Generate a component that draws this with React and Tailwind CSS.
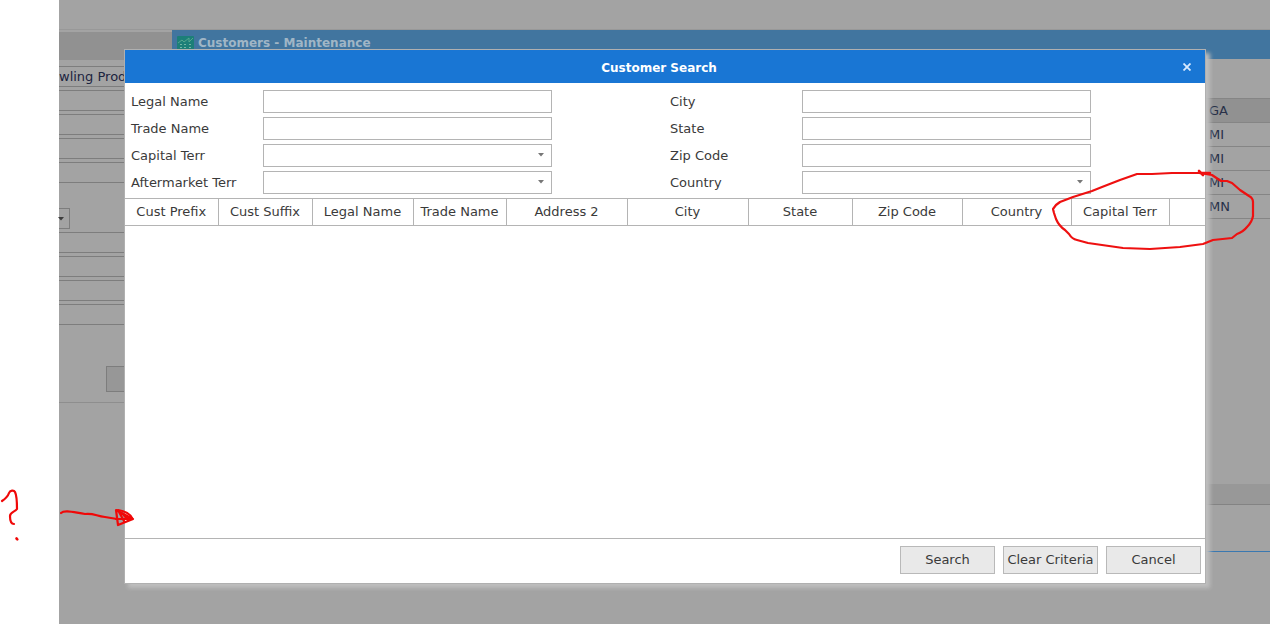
import React from "react";

const COLUMNS = [
  { name: "Cust Prefix", width: "w-[93px]" },
  { name: "Cust Suffix", width: "w-[94px]" },
  { name: "Legal Name", width: "w-[101px]" },
  { name: "Trade Name", width: "w-[93px]" },
  { name: "Address 2", width: "w-[121px]" },
  { name: "City", width: "w-[121px]" },
  { name: "State", width: "w-[104px]" },
  { name: "Zip Code", width: "w-[110px]" },
  { name: "Country", width: "w-[109px]" },
  { name: "Capital Terr", width: "w-[98px]" },
];

const LEFT_FIELDS = [
  { id: "legalName", label: "Legal Name" },
  { id: "tradeName", label: "Trade Name" },
  { id: "capitalTerr", label: "Capital Terr", select: true },
  { id: "aftermarketTerr", label: "Aftermarket Terr", select: true },
];

const RIGHT_FIELDS = [
  { id: "city", label: "City" },
  { id: "state", label: "State" },
  { id: "zipCode", label: "Zip Code" },
  { id: "country", label: "Country", select: true },
];

const STATES = ["GA", "MI", "MI", "MI", "MN"];

function Caret({ className }) {
  return (
    <svg viewBox="0 0 6 4" className={className} aria-hidden="true">
      <path d="M0 0h6L3 3.5z" fill="currentColor" />
    </svg>
  );
}

function Field({ id, label, select }) {
  return (
    <div className="flex h-[23px] items-center">
      <label htmlFor={id} className="w-[132px] shrink-0">{label}</label>
      {select ? (
        <div className="relative h-full w-[289px]">
          <select id={id} className="block h-full w-full appearance-none border border-[#b4b4b4] bg-white px-1 outline-none" />
          <Caret className="pointer-events-none absolute right-2 top-[9px] h-1 w-1.5 text-[#777]" />
        </div>
      ) : (
        <input id={id} type="text" className="h-full w-[289px] border border-[#b4b4b4] bg-white px-1 outline-none" />
      )}
    </div>
  );
}

function FieldGroup({ fields }) {
  return (
    <div className="flex flex-col gap-1 pl-[5px]">
      {fields.map((f) => (
        <Field key={f.id} {...f} />
      ))}
    </div>
  );
}

function DialogButton({ children }) {
  return (
    <button type="button" className="h-7 w-[95px] whitespace-nowrap border border-[#b9b9b9] bg-[#e9e9e9] text-center">
      {children}
    </button>
  );
}

function SearchDialog() {
  return (
    <div role="dialog" aria-label="Customer Search" className="border border-[#b0b0b0] bg-white shadow-[4px_4px_4px_#bebebe]">
      <header className="flex h-[33px] items-center bg-[#1976d4] text-white">
        <h1 className="flex-1 pl-6 pt-0.5 text-center text-xs font-bold">Customer Search</h1>
        <button type="button" aria-label="Close" className="flex w-9 justify-center text-[#d8eaff]">
          <svg viewBox="0 0 8 8" className="h-2 w-2" aria-hidden="true">
            <path d="M0.500 0.500l7 7M7.500 0.500l-7 7" stroke="currentColor" strokeWidth="1.8" />
          </svg>
        </button>
      </header>

      <form className="grid grid-cols-2 px-px pb-1 pt-[7px]">
        <FieldGroup fields={LEFT_FIELDS} />
        <FieldGroup fields={RIGHT_FIELDS} />
      </form>

      {/* Results */}
      <div className="min-h-[341px] border-b border-[#b4b4b4]">
        <table className="w-full table-fixed border-collapse">
          <thead>
            <tr className="h-[27px] border-y border-[#b4b4b4]">
              {COLUMNS.map((c) => (
                <th key={c.name} className={`${c.width} whitespace-nowrap border-r border-[#b4b4b4] p-0 text-center font-normal`}>
                  {c.name}
                </th>
              ))}
              <td />
            </tr>
          </thead>
        </table>
      </div>

      <footer className="flex justify-end gap-2 pb-[9px] pr-1 pt-[7px]">
        <DialogButton>Search</DialogButton>
        <DialogButton>Clear Criteria</DialogButton>
        <DialogButton>Cancel</DialogButton>
      </footer>
    </div>
  );
}

function SideForm() {
  const box = "h-[21px] w-full border-y border-[#7d7d7d] bg-transparent outline-none";
  return (
    <aside className="w-[113px] shrink-0">
      <div className="mt-0.5 h-7 bg-[#919191]" />
      <div className="mt-1.5 flex flex-col gap-[3px]">
        <input aria-label="Customer" readOnly defaultValue="wling Prod" className={`${box} text-[#1c2440]`} />
        <input aria-label="Address 1" className={box} />
        <input aria-label="Address 2" className={box} />
        <input aria-label="Address 3" className={box} />
        <input aria-label="Address 4" className={box} />
      </div>
      <div className="mt-[25px] flex flex-col gap-[3px]">
        <div className="relative h-[21px] w-[11px]">
          <select aria-label="Territory" className="block h-full w-full appearance-none border border-l-0 border-[#7d7d7d] bg-transparent" />
          <Caret className="pointer-events-none absolute right-1.5 top-[9px] h-1 w-1.5 text-[#3c3c3c]" />
        </div>
        <input aria-label="Phone" className={box} />
        <input aria-label="Fax" className={box} />
        <input aria-label="Email" className={box} />
        <input aria-label="Website" className={box} />
      </div>
      <div className="mt-[41px] flex justify-end border-b border-[#8e8e8e] pb-2.5">
        <button type="button" aria-label="Edit" className="h-[26px] w-[66px] border border-[#7d7d7d] bg-[#979797]" />
      </div>
    </aside>
  );
}

function CustomersWindow() {
  return (
    <main className="flex-1">
      <div className="flex h-[29px] items-center gap-1 bg-[#41759f] pb-1 pl-[5px]">
        <svg viewBox="0 0 17 14" className="h-3.5 w-[17px]" aria-hidden="true">
          <rect width="17" height="14" rx="1" fill="#1c7f78" />
          <path d="M1 7l4-3 2 2 5-4v4l4-4" fill="none" stroke="#54a68e" />
          <path d="M3 8h2v1H3zM7 8h2v1H7zM12 8h2v1h-2zM3 11h2v1H3zM7 11h2v1H7zM12 11h2v1h-2z" fill="#6fb5a4" />
        </svg>
        <h2 className="text-xs font-bold text-[#a0b6c6]">Customers - Maintenance</h2>
      </div>
      <table className="ml-auto mt-[39px] w-[70px] border-collapse text-[#283048]">
        <tbody>
          {STATES.map((s, i) => (
            <tr key={i} className="h-[24px] border-y border-[#858585] first:bg-[#919191]">
              <td className="p-0 pl-[9px]">{s}</td>
            </tr>
          ))}
        </tbody>
      </table>
      <div className="mt-[265px] h-[21px] border-b border-[#838383] bg-[#989898]" />
      <div className="h-[47px] border-b border-b-[#3a78b0]" />
    </main>
  );
}

/* Red pen marks drawn over the page */
function PenMarks() {
  return (
    <>
      <svg viewBox="0 0 140 60" className="pointer-events-none absolute left-0 top-[485px] h-[60px] w-[140px]" fill="none" stroke="#f00808" strokeWidth="2.2" strokeLinecap="round" strokeLinejoin="round" aria-hidden="true">
        <path d="M2 16c3-2 6-5 7-8 1-3 5-3 6-1 2 4 2 10 2 17-2 3-7 3-7 7 0 4 1 8 4 8" />
        <path d="M16.500 53.500l.8.8" strokeWidth="2.600" />
        <path d="M61 28c4-4 15 0 24 1 9-1 11 2 20 3l12 2" />
        <path d="M116 25l17 9-15 6zM119 27l5 9M122 28l6 7M116 34h15" />
        <path d="M118 25c6 1 12 4 14 8" />
      </svg>
      <svg viewBox="0 0 204 84" className="pointer-events-none absolute right-[15px] top-[168px] h-[84px] w-[204px]" fill="none" stroke="#ee1010" strokeWidth="2.2" strokeLinecap="round" strokeLinejoin="round" aria-hidden="true">
        <path d="M156 5L121 5L101 6L86 6L69 12L51 19L41 23L22 29L9 34L5 37L2 41L3 45L5 51Q8 58 14 62L18 66Q21 71 26 72L37 75L51 77L72 80L99 81L129 79L152 76L162 72L181 70L186 66Q192 64 196 59Q201 54 202 48L202 34Q202 30 198 28L189 22L181 15L176 13L170 13L161 7L148 5" />
        <path d="M148 3l4 4M150 5h9" strokeWidth="2.600" />
      </svg>
    </>
  );
}

export default function App() {
  return (
    <div className="relative min-h-screen overflow-hidden bg-white font-['DejaVu_Sans',sans-serif] text-[13px] leading-4 text-[#3a3a3a]">
      <div className="ml-[59px] min-h-screen bg-[#a3a3a3]">
        <div className="h-[30px] border-b border-[#989898]" />
        <div className="flex">
          <SideForm />
          <CustomersWindow />
        </div>
      </div>
      <div className="absolute inset-x-0 top-0 pl-[124px] pr-16 pt-[49px]">
        <SearchDialog />
      </div>
      <PenMarks />
    </div>
  );
}
